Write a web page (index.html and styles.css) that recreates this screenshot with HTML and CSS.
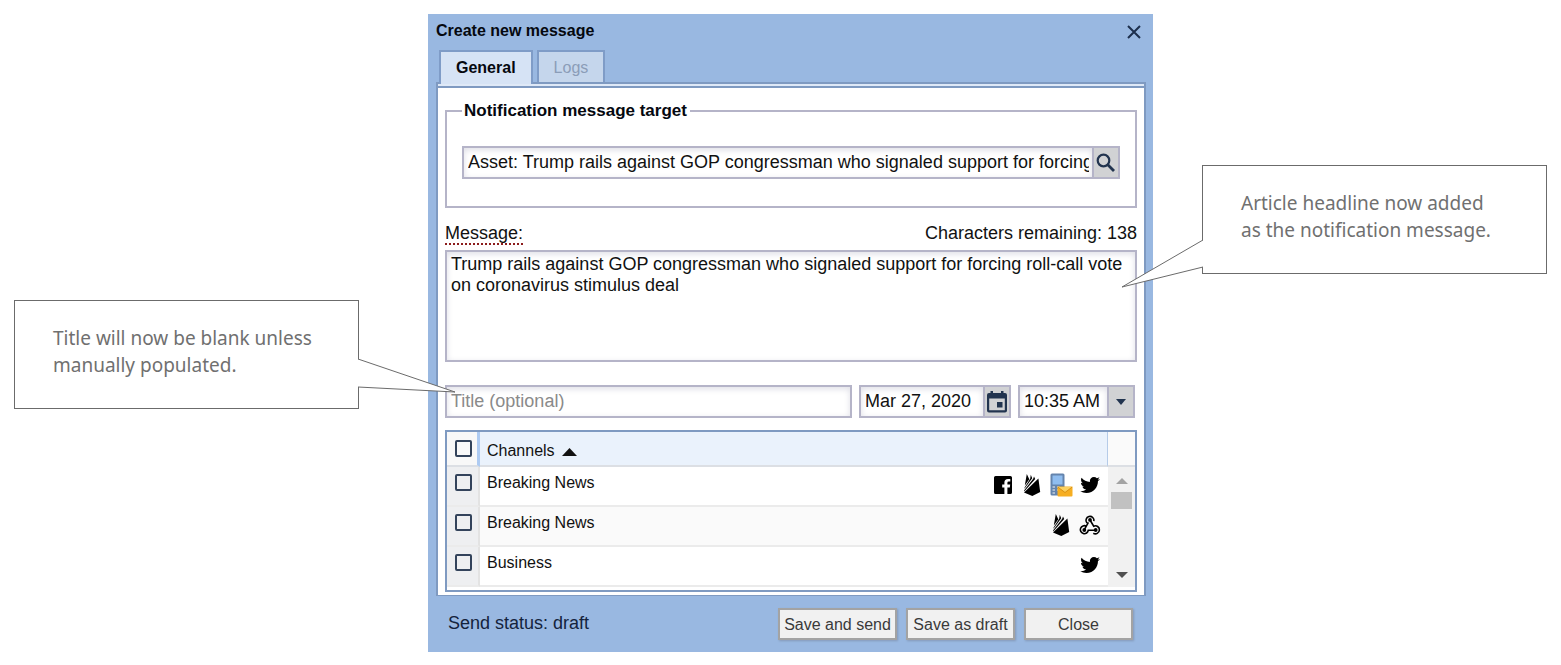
FILE: index.html
```html
<!DOCTYPE html>
<html lang="en">
<head>
<meta charset="utf-8">
<title>Create new message</title>
<link rel="stylesheet" href="styles.css">
</head>
<body>
<svg class="sprite" aria-hidden="true">
  <symbol id="flame" viewBox="0 0 24 24">
    <path d="M4.800 12.500 6.800 1 9.300 6.200zM4.600 14.600 10.200 5.800 10.800 1.800 12.200 5.200 4.400 15.800zM4.200 17.200 13.200 5.800 14 3.600 15.200 6 4.200 18.400zM4 19.400 18.400 5.400 20.200 19 12.300 23z"/>
  </symbol>
  <symbol id="twitter" viewBox="-2 -2 28 28">
    <path d="M23.64 4.94c-.83.37-1.75.64-2.72.76.98-.6 1.73-1.52 2.08-2.63-.91.54-1.92.93-2.99 1.15A4.73 4.73 0 0 0 16.55 2.7c-2.62 0-4.73 2.12-4.73 4.73 0 .37.04.73.12 1.08C8 8.31 4.5 6.42 2.17 3.56a4.7 4.7 0 0 0-.64 2.38c0 1.64.84 3.09 2.11 3.94-.78-.02-1.51-.24-2.15-.59v.06c0 2.29 1.63 4.2 3.8 4.64-.4.1-.82.16-1.25.16-.31 0-.6-.02-.89-.08.6 1.88 2.35 3.25 4.42 3.28A9.5 9.5 0 0 1 .57 19.3a13.4 13.4 0 0 0 7.25 2.13c8.7 0 13.46-7.21 13.46-13.46l-.02-.61a9.5 9.5 0 0 0 2.38-2.42z"/>
  </symbol>
  <symbol id="facebook" viewBox="0 0 24 24">
    <path fill-rule="evenodd" d="M4.600 3H19.400Q21 3 21 4.600V19.400Q21 21 19.400 21H16.400V14.400H18.800L19.200 11.600H16.400V9.800Q16.400 8.500 17.800 8.500H19.300V5.900H17Q13.400 5.900 13.400 9.500V11.600H11.200V14.400H13.400V21H4.600Q3 21 3 19.400V4.600Q3 3 4.600 3Z"/>
  </symbol>
  <symbol id="webhook" viewBox="0 0 24 24">
    <g fill="none" stroke="currentColor" stroke-width="1.600">
      <path d="M8.900 10A4 4 0 1 1 15.900 8.200M12 7 15.700 13.200A4 4 0 1 1 15.300 20.200M8.300 13.200A4 4 0 1 0 10.300 17.200H17.500M10.400 9.300 6.500 16.400"/>
    </g>
    <circle cx="12" cy="6.900" r="1.900"/><circle cx="6.300" cy="17" r="1.900"/><circle cx="17.700" cy="17" r="1.900"/>
  </symbol>
  <symbol id="sms" viewBox="0 0 24 24">
    <rect x="1.500" y="0.500" width="14" height="22" rx="1.500" fill="#6484ad"/>
    <rect x="3.500" y="2.500" width="10" height="9" fill="#8fbdf0"/>
    <path d="M3.500 14h2.500m2 0h2.500M3.500 17h2.500m2 0h2.500M3.500 20h2.500" stroke="#c3cedb" stroke-width="1.600"/>
    <rect x="8.500" y="13.500" width="15" height="10" rx="1" fill="#f6ae22"/>
    <path d="M8.800 14 16 19.500 23.200 14" fill="#fcd160" stroke="#d58b10" stroke-width=".9"/>
  </symbol>
</svg>
<main class="stage">
  <aside class="callout callout-title">
    <p>Title will now be blank unless<br>manually populated.</p>
    <svg class="tail" width="98" height="34" viewBox="0 0 98 34" aria-hidden="true">
      <path d="M0 0 97 33 0 28"/>
    </svg>
  </aside>

  <section class="dialog" aria-labelledby="dialog-title">
    <header class="dialog-head">
      <h1 id="dialog-title">Create new message</h1>
      <button class="close" type="button" aria-label="Close dialog">
        <svg width="14" height="14" viewBox="0 0 14 14"><path d="M1 1 13 13M13 1 1 13"/></svg>
      </button>
    </header>
    <div class="tabs" role="tablist">
      <button class="tab active" type="button" role="tab" aria-selected="true">General</button>
      <button class="tab" type="button" role="tab" aria-selected="false">Logs</button>
    </div>
    <form class="panel">
      <fieldset class="target">
        <legend>Notification message target</legend>
        <div class="combo">
          <input class="field" type="text" aria-label="Notification message target" value="Asset: Trump rails against GOP congressman who signaled support for forcing roll-call vote on coronavirus stimulus deal">
          <button class="addon" type="button" aria-label="Search">
            <svg width="20" height="20" viewBox="0 0 20 20"><circle cx="7.500" cy="7.500" r="5.800" fill="none" stroke="#22344f" stroke-width="2.200"/><path d="M11.800 11.800 18 18" stroke="#22344f" stroke-width="2.800"/></svg>
          </button>
        </div>
      </fieldset>

      <div class="message-head">
        <label for="message">Message:</label>
        <span>Characters remaining: 138</span>
      </div>
      <textarea class="field message" id="message" spellcheck="false">Trump rails against GOP congressman who signaled support for forcing roll-call vote on coronavirus stimulus deal</textarea>

      <div class="details">
        <input class="field title" type="text" aria-label="Title" placeholder="Title (optional)">
        <div class="combo date">
          <input class="field" type="text" aria-label="Date" value="Mar 27, 2020">
          <button class="addon" type="button" aria-label="Pick a date">
            <svg width="20" height="22" viewBox="0 0 20 22"><path fill-rule="evenodd" d="M3.500 0H6V2H14V0H16.500V2H18Q20 2 20 4V19.500Q20 21.500 18 21.500H2Q0 21.500 0 19.500V4Q0 2 2 2H3.500ZM2.200 7.500V19.300H17.800V7.500Z"/><path d="M10 11h5.500v5.500H10z"/></svg>
          </button>
        </div>
        <div class="combo time">
          <input class="field" type="text" aria-label="Time" value="10:35 AM">
          <button class="addon" type="button" aria-label="Pick a time">
            <svg width="10" height="6" viewBox="0 0 10 6"><path d="M0 0H10L5 6Z"/></svg>
          </button>
        </div>
      </div>

      <div class="grid">
        <table class="channels">
          <thead>
            <tr>
              <th class="pick"><input type="checkbox" aria-label="Select all channels"></th>
              <th class="name" colspan="2">Channels <svg class="sort" width="15" height="8" viewBox="0 0 15 8"><path d="M0 8 7.500 0 15 8Z"/></svg></th>
            </tr>
          </thead>
          <tbody>
            <tr>
              <td class="pick"><input type="checkbox" id="c1"></td>
              <td class="name"><label for="c1">Breaking News</label></td>
              <td class="icons"><div>
                <svg><use href="#facebook"/></svg><svg><use href="#flame"/></svg><svg><use href="#sms"/></svg><svg><use href="#twitter"/></svg>
              </div></td>
            </tr>
            <tr>
              <td class="pick"><input type="checkbox" id="c2"></td>
              <td class="name"><label for="c2">Breaking News</label></td>
              <td class="icons"><div><svg><use href="#flame"/></svg><svg><use href="#webhook"/></svg></div></td>
            </tr>
            <tr>
              <td class="pick"><input type="checkbox" id="c3"></td>
              <td class="name"><label for="c3">Business</label></td>
              <td class="icons"><div><svg><use href="#twitter"/></svg></div></td>
            </tr>
          </tbody>
        </table>
        <div class="scroll" aria-hidden="true">
          <div class="corner"></div>
          <div class="track">
            <svg width="12" height="6" viewBox="0 0 12 6"><path d="M0 6 6 0 12 6Z" fill="#a3a3a3"/></svg>
            <div class="thumb"></div>
            <svg class="down" width="12" height="6" viewBox="0 0 12 6"><path d="M0 0H12L6 6Z" fill="#505050"/></svg>
          </div>
        </div>
      </div>
    </form>
    <footer class="dialog-foot">
      <span class="status">Send status: draft</span>
      <button class="action wide" type="button">Save and send</button>
      <button class="action" type="button">Save as draft</button>
      <button class="action" type="button">Close</button>
    </footer>
  </section>

  <aside class="callout callout-message">
    <p>Article headline now added<br>as the notification message.</p>
    <svg class="tail" width="82" height="48" viewBox="0 0 82 48" aria-hidden="true">
      <path d="M82 0 1 47 82 27"/>
    </svg>
  </aside>
</main>
</body>
</html>
```

FILE: styles.css
```css
* { box-sizing: border-box; }

body {
  margin: 0;
  padding: 14px;
  background: #fff;
  color: #111;
  font: 18px/21px "Liberation Sans", Arial, sans-serif;
}

button, input, textarea { font: inherit; color: inherit; margin: 0; }
button { padding: 0; cursor: pointer; }
svg { display: block; fill: currentColor; }
.sprite { position: absolute; width: 0; height: 0; }

.stage { display: flex; align-items: flex-start; }

/* Callouts */
.callout {
  position: relative;
  flex: 0 0 345px;
  min-width: 0;
  padding: 24px 38px 29px;
  border: 1px solid #6b6b6b;
  background: #fff;
  color: #707070;
  font: 19px/27px "Noto Sans", "Open Sans", sans-serif;
}
.callout p { margin: 0; white-space: nowrap; }
.callout-title { margin-top: 286px; z-index: 1; }
.callout-message { margin-top: 151px; }
.tail {
  position: absolute;
  overflow: visible;
  fill: #fff;
  stroke: #6b6b6b;
  stroke-width: 1;
}
.callout-title .tail { left: 100%; top: 58px; }
.callout-message .tail { right: 100%; top: 74px; }

/* Dialog */
.dialog {
  flex: 1;
  min-width: 0;
  margin: 0 49px 0 69px;
  padding: 0 7px 0 8px;
  background: #99b8e1;
}
.dialog-head { display: flex; justify-content: space-between; height: 36px; padding: 6px 1px 0 0; }
.dialog-head h1 { margin: 0; font-size: 16px; line-height: 21px; color: #05080f; }
.close {
  width: 22px;
  height: 24px;
  display: grid;
  place-items: center;
  border: 0;
  background: none;
}
.close svg { stroke: #1d2f4d; stroke-width: 2; }

.tabs { display: flex; gap: 4px; padding-left: 3px; }
.tab {
  height: 32px;
  padding: 0 15px;
  border: 2px solid #7f9cc7;
  border-bottom: 0;
  background: #c5d6ec;
  color: #8b9db8;
  font-size: 16px;
}
.tab.active {
  position: relative;
  z-index: 1;
  height: 34px;
  margin-bottom: -2px;
  padding-bottom: 2px;
  background: #d6e3f5;
  color: #05080f;
  font-weight: bold;
}

.panel {
  padding: 16px 7px 3px;
  border: solid #7f9ac1;
  border-width: 2px 2px 1px;
  background: linear-gradient(#dfe9f7 2px, #7f9ac1 2px, #7f9ac1 4px, #fff 4px);
}

.target {
  min-width: 0;
  margin: 0;
  padding: 25px 15px 27px;
  border: 2px solid #b5b4c8;
}
.target legend { padding: 0 3px 0 2px; font-size: 17px; line-height: 21px; font-weight: bold; color: #05080f; }

.field {
  min-width: 0;
  height: 33px;
  padding: 0 4px;
  border: 2px solid #b5b4c8;
  border-radius: 0;
  outline: 0;
  background: #fff;
  box-shadow: inset 0 2px 6px #dedee6;
}
.field::placeholder { color: #8a8a8a; opacity: 1; }

.combo { display: flex; }
.combo .field { flex: 1; padding-right: 3px; }
.addon {
  width: 26px;
  display: grid;
  place-items: center;
  border: 2px solid #b5b4c8;
  border-left: 0;
  background: #d1d2d4;
  color: #22344f;
}

.message-head { display: flex; justify-content: space-between; margin: 15px 0 5px; }
.message-head label { border-bottom: 2px dotted #8c1c1c; line-height: 20px; }
.message {
  display: block;
  width: 100%;
  height: 112px;
  padding: 2px 4px;
  resize: none;
  overflow: hidden;
}

.details { display: flex; gap: 7px; margin: 23px 2px 12px 0; }
.title { flex: 1; }
.date { width: 152px; }
.time { width: 117px; }

/* Channel list */
.grid {
  display: flex;
  padding-bottom: 3px;
  border: 2px solid #7f9ac1;
}
.channels { flex: 1; border-collapse: separate; border-spacing: 0; font-size: 16px; }
.channels th, .channels td { padding: 0; text-align: left; font-weight: normal; }
.channels th { height: 35px; background: #eaf2fc; border-bottom: 2px solid #dcdfe4; border-right: 1px solid #b5cbe8; }
.channels th.pick { background: #f8f8f8; border-right: 3px solid #aecbf2; }
.channels th.name { padding: 3px 0 0 7px; }
.channels td { height: 40px; vertical-align: top; border-bottom: 2px solid #ebebeb; }
.channels tbody tr:nth-child(2) { background: #fafafa; }
.channels .pick { width: 33px; padding-left: 8px; }
.channels td.pick { padding-top: 7px; background: #eeeff1; background-clip: padding-box; border-right: 2px solid #e3e3e3; }
.channels td.name { padding: 5px 0 0 7px; }
.channels td.icons { padding: 6px 6px 0 0; }
.icons div { display: flex; justify-content: flex-end; gap: 5px; }
.icons svg { width: 24px; height: 24px; color: #000; }
.sort { display: inline-block; margin-left: 3px; vertical-align: 0; }

input[type="checkbox"] {
  appearance: none;
  display: block;
  width: 17px;
  height: 17px;
  border: 2px solid #33435b;
  border-radius: 2px;
  background: transparent;
}

.scroll { display: flex; flex-direction: column; width: 27px; }
.corner { height: 35px; background: #fafafa; border-bottom: 2px solid #dcdfe4; }
.track {
  flex: 1;
  display: flex;
  flex-direction: column;
  align-items: center;
  padding: 11px 0 9px;
  background: #f1f1f1;
}
.thumb { width: 21px; height: 17px; margin-top: 8px; background: #c1c1c1; }
.down { margin-top: auto; }

.dialog-foot { display: flex; align-items: center; gap: 9px; padding: 12px 13px 12px 12px; }
.status { flex: 1; padding-bottom: 2px; color: #14233c; }
.action {
  width: 109px;
  height: 32px;
  border: 2px solid #a3a3a3;
  background: #f1f1f1;
  box-shadow: 1px 1px 2px #8499b8;
  color: #3a3a3a;
  font-size: 16px;
  white-space: nowrap;
}
.action.wide { width: 119px; }
```
